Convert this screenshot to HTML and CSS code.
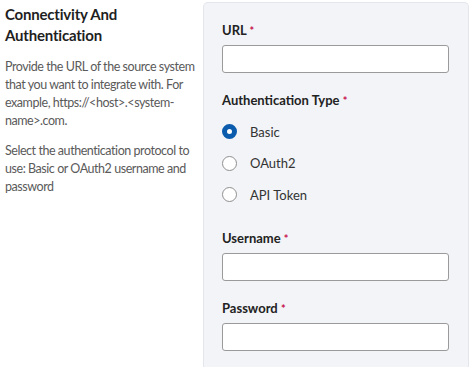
FILE: index.html
```html
<!DOCTYPE html>
<html lang="en">
<head>
  <meta charset="UTF-8" />
  <title>Connectivity And Authentication</title>
  <link rel="stylesheet" href="styles.css">
</head>
<body>

<div class="section">
  <div class="intro">
    <h2>Connectivity And Authentication</h2>
    <p>Provide the URL of the source system that you want to integrate with. For example, https://&lt;host&gt;.&lt;system-name&gt;.com.</p>
    <p>Select the authentication protocol to use: Basic or OAuth2 username and password</p>
  </div>

  <div class="panel">
    <div class="field">
      <label>URL <span class="req">*</span></label>
      <input type="text">
    </div>

    <div class="field">
      <label>Authentication Type <span class="req">*</span></label>
      <div class="radios">
        <div class="radio checked"><span class="dot"></span>Basic</div>
        <div class="radio"><span class="dot"></span>OAuth2</div>
        <div class="radio"><span class="dot"></span>API Token</div>
      </div>
    </div>

    <div class="field">
      <label>Username <span class="req">*</span></label>
      <input type="text">
    </div>

    <div class="field">
      <label>Password <span class="req">*</span></label>
      <input type="password">
    </div>
  </div>
</div>

</body>
</html>
```

FILE: styles.css
```css
body {
  margin: 0; padding: 0;
  font-family: 'Lato', sans-serif;
  background: #fff;
  color: #222;
  overflow: hidden;
}
.section {
  display: flex;
  padding: 2px 5px 0 5px;
  height: 365px;
}
.intro {
  width: 196px;
  padding-top: 2px;
}
.intro h2 {
  margin: 0;
  font-size: 15px;
  line-height: 21px;
  font-weight: bold;
  letter-spacing: -0.2px;
  color: #1f1f1f;
}
.intro p {
  margin: 12px 0 0 0;
  font-size: 12.5px;
  line-height: 18px;
  letter-spacing: -0.45px;
  color: #5a5a5a;
}
.panel {
  margin-left: 2px;
  width: 227px;
  padding: 18px 19px 0 18px;
  background: #f2f4f7;
  border: 1px solid #e3e6ea;
  border-bottom: none;
  border-radius: 5px 5px 0 0;
}
.field {
  margin-bottom: 18px;
}
.field label {
  display: block;
  font-size: 13px;
  font-weight: bold;
  line-height: 18px;
  color: #222;
  margin-bottom: 6px;
}
.req {
  color: #c8104e;
  font-size: 11px;
  line-height: 10px;
}
.field input {
  box-sizing: border-box;
  display: block;
  width: 100%;
  height: 28px;
  border: 1px solid #9a9a9a;
  border-radius: 3px;
  background: #fff;
}
.radios {
  padding-top: 1px;
}
.radio {
  display: flex;
  align-items: center;
  height: 31.5px;
  font-size: 13px;
  color: #333;
}
.dot {
  box-sizing: border-box;
  width: 15px;
  height: 15px;
  border: 1px solid #8f8f8f;
  border-radius: 50%;
  background: #fff;
  margin-right: 13px;
}
.checked .dot {
  border: 5px solid #0b5cad;
}
```
